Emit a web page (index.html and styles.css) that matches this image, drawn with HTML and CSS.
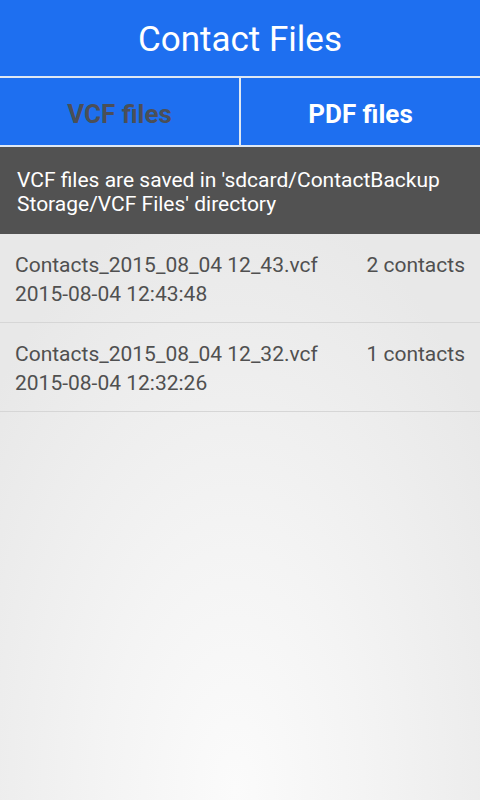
FILE: index.html
```html
<!DOCTYPE html>
<html>
<head>
<meta charset="utf-8">
<link rel="stylesheet" href="styles.css">
</head>
<body>
<div class="app">
  <header class="title-bar">Contact Files</header>
  <nav class="tabs">
    <div class="tab tab-active">VCF files</div>
    <div class="tab">PDF files</div>
  </nav>
  <div class="info">VCF files are saved in 'sdcard/ContactBackup Storage/VCF Files' directory</div>
  <ul class="file-list">
    <li class="file-row">
      <div class="file-main">
        <div class="file-name">Contacts_2015_08_04 12_43.vcf</div>
        <div class="file-date">2015-08-04 12:43:48</div>
      </div>
      <div class="file-count">2 contacts</div>
    </li>
    <li class="file-row">
      <div class="file-main">
        <div class="file-name">Contacts_2015_08_04 12_32.vcf</div>
        <div class="file-date">2015-08-04 12:32:26</div>
      </div>
      <div class="file-count">1 contacts</div>
    </li>
  </ul>
</div>
</body>
</html>
```

FILE: styles.css
```css
html, body {
  margin: 0;
  padding: 0;
  height: 100%;
}
body {
  font-family: Roboto, "Noto Sans", sans-serif;
  background: radial-gradient(ellipse 320px 600px at 235px 790px, #fbfbfb 0%, #f4f4f4 40%, #ededed 75%, #e8e8e8 100%);
  background-color: #e8e8e8;
  min-height: 800px;
}
.app {
  display: flex;
  flex-direction: column;
}
.title-bar {
  height: 78px;
  box-sizing: border-box;
  padding-top: 3px;
  background: #1e6ff0;
  color: #ffffff;
  font-size: 35px;
  display: flex;
  align-items: center;
  justify-content: center;
  border-bottom: 2px solid #dfe8f3;
}
.tabs {
  display: flex;
  height: 67px;
  border-bottom: 2px solid #dfe8f3;
}
.tab {
  flex: 1;
  background: #1e6ff0;
  color: #ffffff;
  font-weight: bold;
  font-size: 26px;
  display: flex;
  align-items: center;
  justify-content: center;
  padding-top: 4px;
}
.tab + .tab {
  border-left: 2px solid #dfe8f3;
}
.tab-active {
  color: #4b4f57;
}
.info {
  background: #525252;
  color: #ffffff;
  font-size: 21px;
  line-height: 24px;
  height: 87px;
  box-sizing: border-box;
  padding: 21px 17px 0 17px;
}
.file-list {
  list-style: none;
  margin: 0;
  padding: 0;
}
.file-row {
  display: flex;
  justify-content: space-between;
  align-items: flex-start;
  height: 89px;
  box-sizing: border-box;
  border-bottom: 1px solid #d6d6d6;
  padding: 17px 15px 0 15px;
  color: #505050;
  font-size: 21px;
  line-height: 29px;
}
.file-count {
  text-align: right;
}
```
